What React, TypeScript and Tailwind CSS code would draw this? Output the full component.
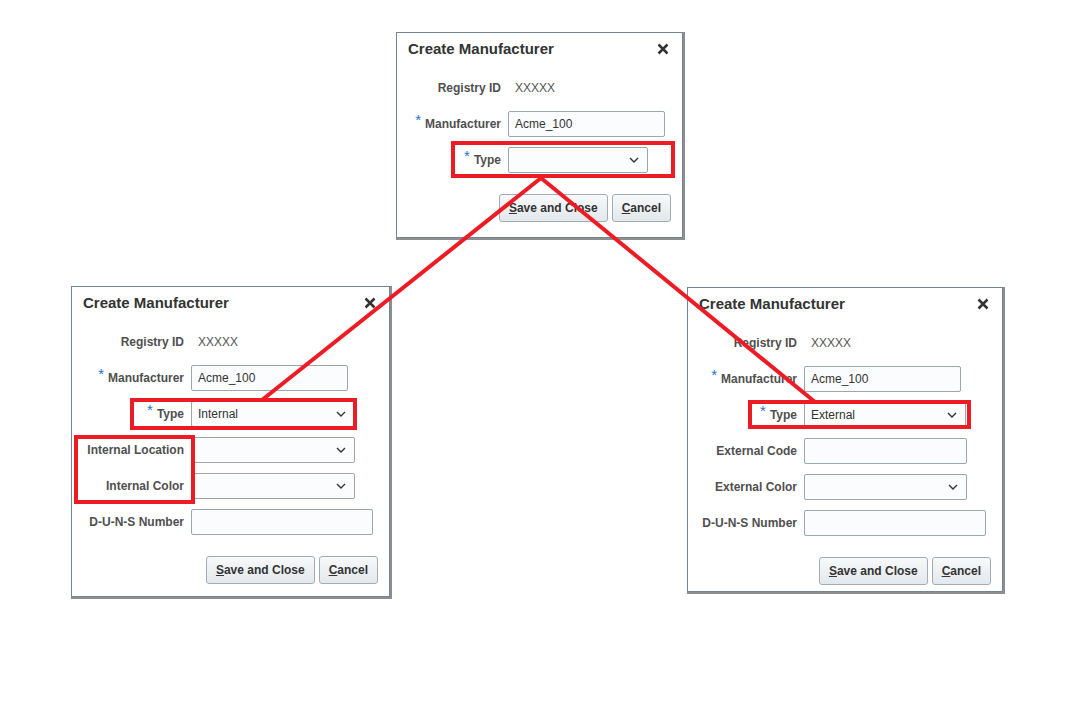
import { ReactNode } from "react";

type Field = {
  label: string;
  required?: boolean;
  kind: "text" | "input" | "select";
  value?: string;
  width: number;
};

type DialogProps = {
  x: number;
  y: number;
  width: number;
  labelWidth: number;
  bottomPad: number;
  fields: Field[];
};

const font = { fontFamily: '"Liberation Sans", Arial, sans-serif' };

function Chevron() {
  return (
    <svg width="10" height="6" viewBox="0 0 10 6" className="shrink-0">
      <path d="M1 1 L5 5 L9 1" fill="none" stroke="#333" strokeWidth="1.4" />
    </svg>
  );
}

function CloseIcon() {
  return (
    <svg width="12" height="12" viewBox="0 0 12 12">
      <path d="M1.5 1.5 L10.5 10.5 M10.5 1.5 L1.5 10.5" stroke="#333" strokeWidth="2.5" />
    </svg>
  );
}

function Button({ children, first }: { children: ReactNode; first: string }) {
  return (
    <button className="h-[28px] px-[9px] rounded-[3px] border border-[#a3acb5] bg-gradient-to-b from-[#f7f9fa] to-[#e3e8ec] text-[12px] font-bold text-[#333]">
      <span className="underline">{first}</span>
      {children}
    </button>
  );
}

function FieldControl({ field }: { field: Field }) {
  if (field.kind === "text") {
    return <span className="pl-[7px] text-[12px] text-[#555]">{field.value}</span>;
  }
  return (
    <div
      className="h-[26px] flex items-center justify-between pl-[6px] pr-[8px] border border-[#9aa6b1] rounded-[2px] bg-[#fbfcfd] text-[12px] text-[#333]"
      style={{ width: field.width }}
    >
      <span>{field.value}</span>
      {field.kind === "select" && <Chevron />}
    </div>
  );
}

function Dialog({ x, y, width, labelWidth, bottomPad, fields }: DialogProps) {
  return (
    <div
      className="absolute bg-white border border-[#71849a] shadow-[1px_1px_0_1px_#8e8e8e]"
      style={{ left: x, top: y, width, paddingBottom: bottomPad }}
    >
      <div className="h-[32px] flex items-center justify-between pl-[11px] pr-[13px]">
        <span className="text-[15px] font-bold text-[#333]">Create Manufacturer</span>
        <CloseIcon />
      </div>
      <div
        className="mt-[10px] grid gap-y-[10px] gap-x-[7px] items-center"
        style={{ gridTemplateColumns: `${labelWidth}px auto` }}
      >
        {fields.map((f) => (
          <div key={f.label} className="contents">
            <div className="h-[26px] flex items-center justify-end text-[12px] font-bold text-[#4f4f4f]">
              {f.required && (
                <span className="relative -top-[4px] mr-[4px] text-[15px] text-[#1f74c4] font-normal">*</span>
              )}
              {f.label}
            </div>
            <div className="flex items-center">
              <FieldControl field={f} />
            </div>
          </div>
        ))}
      </div>
      <div className="mt-[21px] pr-[11px] flex justify-end gap-[4px]">
        <Button first="S">ave and Close</Button>
        <Button first="C">ancel</Button>
      </div>
    </div>
  );
}

export default function App() {
  const registry: Field = { label: "Registry ID", kind: "text", value: "XXXXX", width: 0 };
  const manufacturer: Field = {
    label: "Manufacturer",
    required: true,
    kind: "input",
    value: "Acme_100",
    width: 157,
  };

  return (
    <div className="relative w-[1078px] h-[714px] bg-white overflow-hidden" style={font}>
      <Dialog
        x={396}
        y={32}
        width={287}
        labelWidth={104}
        bottomPad={15}
        fields={[
          registry,
          manufacturer,
          { label: "Type", required: true, kind: "select", value: "", width: 140 },
        ]}
      />
      <Dialog
        x={71}
        y={286}
        width={319}
        labelWidth={112}
        bottomPad={12}
        fields={[
          registry,
          manufacturer,
          { label: "Type", required: true, kind: "select", value: "Internal", width: 164 },
          { label: "Internal Location", kind: "select", value: "", width: 164 },
          { label: "Internal Color", kind: "select", value: "", width: 164 },
          { label: "D-U-N-S Number", kind: "input", value: "", width: 182 },
        ]}
      />
      <Dialog
        x={687}
        y={287}
        width={316}
        labelWidth={109}
        bottomPad={6}
        fields={[
          registry,
          manufacturer,
          { label: "Type", required: true, kind: "select", value: "External", width: 162 },
          { label: "External Code", kind: "input", value: "", width: 163 },
          { label: "External Color", kind: "select", value: "", width: 163 },
          { label: "D-U-N-S Number", kind: "input", value: "", width: 182 },
        ]}
      />

      {/* callout overlay */}
      <svg className="absolute inset-0 pointer-events-none" width="1078" height="714">
        <g fill="none" stroke="#ed1c24" strokeWidth="4">
          <rect x="453" y="143" width="220" height="33" />
          <rect x="132" y="400" width="223" height="28" />
          <rect x="76" y="437" width="117" height="65" />
          <rect x="750" y="402" width="219" height="25" />
          <path d="M541 178 L262 400" />
          <path d="M541 178 L815 402" />
        </g>
      </svg>
    </div>
  );
}
